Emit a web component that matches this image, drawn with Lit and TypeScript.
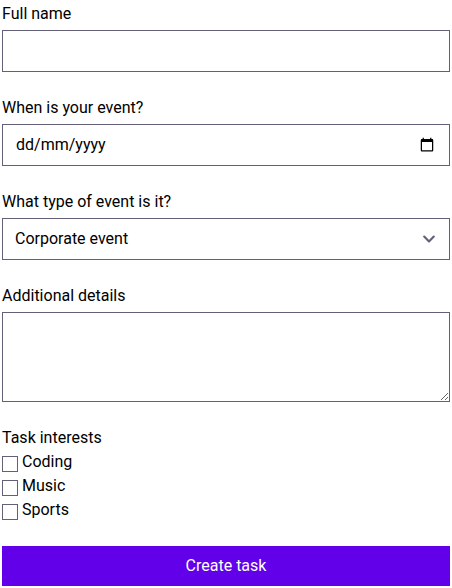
import { LitElement, html, css } from "lit";
import { customElement, state } from "lit/decorators.js";

@customElement("app-root")
export class AppRoot extends LitElement {
  @state() private date = "";

  private interests = ["Coding", "Music", "Sports"];

  static styles = css`
    :host {
      display: block;
      background: #fff;
      color: #000;
      font-family: Roboto, "Liberation Sans", sans-serif;
      font-size: 16px;
      line-height: 24px;
    }
    * {
      box-sizing: border-box;
    }
    form {
      display: flex;
      flex-direction: column;
      gap: 24px;
      padding: 2px;
    }
    .group {
      display: flex;
      flex-direction: column;
      gap: 4px;
    }
    .interests {
      margin: 0;
      padding: 0;
      border: 0;
      min-width: 0;
    }
    legend {
      padding: 0;
    }
    .box {
      position: relative;
      display: grid;
    }
    .field {
      display: block;
      width: 100%;
      height: 42px;
      margin: 0;
      padding: 8px 12px;
      border: 1px solid #646078;
      border-radius: 0;
      background: #fff;
      color: inherit;
      font: inherit;
      appearance: none;
    }
    .area {
      height: 90px;
      resize: vertical;
    }
    .date.empty::-webkit-datetime-edit {
      opacity: 0;
    }
    .hint {
      position: absolute;
      top: 9px;
      left: 14px;
      pointer-events: none;
    }
    .chevron {
      position: absolute;
      top: 9px;
      right: 9px;
      width: 24px;
      height: 24px;
      pointer-events: none;
    }
    .option {
      display: flex;
      align-items: center;
      gap: 4px;
    }
    .check {
      appearance: none;
      width: 16px;
      height: 16px;
      margin: 4px 0 0;
      border: 1px solid #646078;
      background: #fff;
    }
    .check:checked {
      background: #6200ea;
      border-color: #6200ea;
    }
    .submit {
      height: 40px;
      padding: 8px 16px;
      border: 0;
      background: #6200ea;
      color: #fff;
      font: inherit;
      cursor: pointer;
    }
  `;

  render() {
    return html`
      <form @submit=${(e: Event) => e.preventDefault()}>
        <div class="group">
          <label for="name">Full name</label>
          <input class="field" id="name" type="text" />
        </div>
        <div class="group">
          <label for="date">When is your event?</label>
          <div class="box">
            <input
              class="field date ${this.date ? "" : "empty"}"
              id="date"
              type="date"
              .value=${this.date}
              @change=${(e: Event) => (this.date = (e.target as HTMLInputElement).value)}
            />
            ${this.date ? "" : html`<span class="hint" aria-hidden="true">dd/mm/yyyy</span>`}
          </div>
        </div>
        <div class="group">
          <label for="type">What type of event is it?</label>
          <div class="box">
            <select class="field" id="type">
              <option>Corporate event</option>
            </select>
            <svg class="chevron" viewBox="0 0 20 20" fill="none" aria-hidden="true">
              <path d="M6 8l4 4 4-4" stroke="#646078" stroke-width="1.8" stroke-linecap="round" stroke-linejoin="round" />
            </svg>
          </div>
        </div>
        <div class="group">
          <label for="details">Additional details</label>
          <textarea class="field area" id="details"></textarea>
        </div>
        <fieldset class="interests">
          <legend>Task interests</legend>
          ${this.interests.map(
            (name) => html`
              <label class="option"><input class="check" type="checkbox" name="interests" value=${name} />${name}</label>
            `
          )}
        </fieldset>
        <button class="submit" type="submit">Create task</button>
      </form>
    `;
  }
}
